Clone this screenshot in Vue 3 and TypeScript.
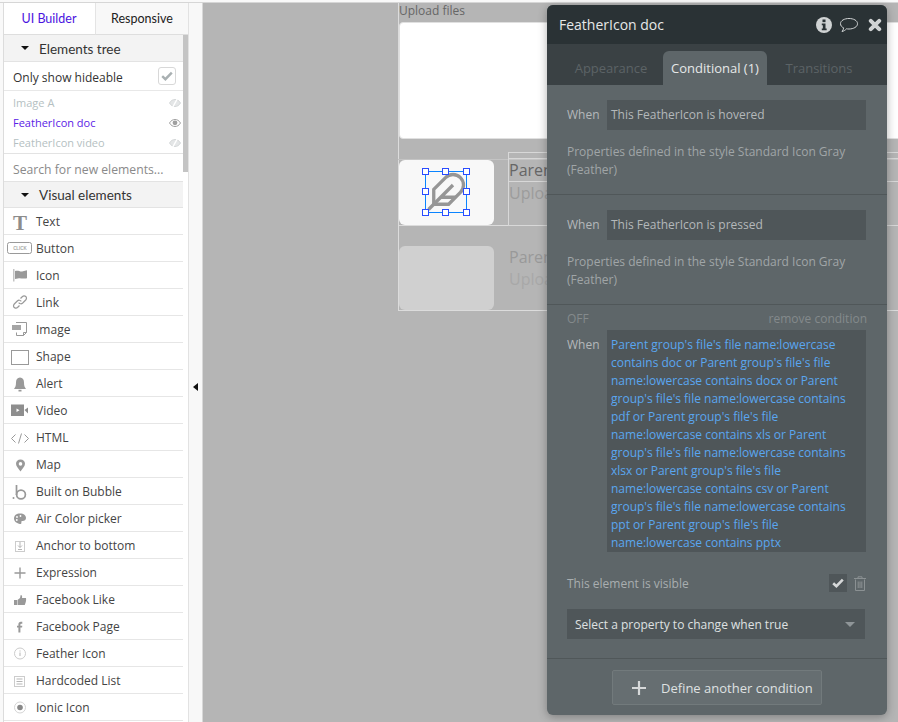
<script setup lang="ts">
interface Item { label: string; icon: string }
const items: Item[] = [
  { label: 'Text', icon: 'text' },
  { label: 'Button', icon: 'button' },
  { label: 'Icon', icon: 'flag' },
  { label: 'Link', icon: 'link' },
  { label: 'Image', icon: 'image' },
  { label: 'Shape', icon: 'shape' },
  { label: 'Alert', icon: 'bell' },
  { label: 'Video', icon: 'video' },
  { label: 'HTML', icon: 'html' },
  { label: 'Map', icon: 'pin' },
  { label: 'Built on Bubble', icon: 'bubble' },
  { label: 'Air Color picker', icon: 'palette' },
  { label: 'Anchor to bottom', icon: 'anchor' },
  { label: 'Expression', icon: 'plus' },
  { label: 'Facebook Like', icon: 'thumb' },
  { label: 'Facebook Page', icon: 'fb' },
  { label: 'Feather Icon', icon: 'info' },
  { label: 'Hardcoded List', icon: 'list' },
  { label: 'Ionic Icon', icon: 'radio' },
]
const handles = ['h-l h-t', 'h-c h-t', 'h-r h-t', 'h-l h-m', 'h-r h-m', 'h-l h-b', 'h-c h-b', 'h-r h-b']
const longCond = "Parent group's file's file name:lowercase contains doc or Parent group's file's file name:lowercase contains docx or Parent group's file's file name:lowercase contains pdf or Parent group's file's file name:lowercase contains xls or Parent group's file's file name:lowercase contains xlsx or Parent group's file's file name:lowercase contains csv or Parent group's file's file name:lowercase contains ppt or Parent group's file's file name:lowercase contains pptx"
</script>

<template>
  <div class="app">
    <aside class="side">
      <div class="tabs">
        <div class="tab on">UI Builder</div>
        <div class="tab">Responsive</div>
      </div>
      <div class="scrollwrap">
        <div class="list">
          <div class="sec"><span class="tri"></span>Elements tree</div>
          <div class="hideable">
            <span class="hide-label">Only show hideable</span>
            <span class="chk"><svg width="12" height="10" viewBox="0 0 12 10"><path d="M1.2 5.2 4.4 8.2 10.8 1.6" fill="none" stroke="#a9b0b2" stroke-width="2.4"/></svg></span>
          </div>
          <div class="tree">
            <div class="node dim">Image A<svg class="eye" width="12" height="10" viewBox="0 0 12 10"><path d="M.5 5C2 2.4 4 1.5 6 1.5S10 2.4 11.500 5C10 7.600 8 8.500 6 8.500S2 7.600.5 5Z" fill="#e4e6e7" stroke="#d5d8d9"/><path d="M8.500 .5 3.500 9.500" stroke="#fff" stroke-width="1.500"/></svg></div>
            <div class="node sel">FeatherIcon doc<svg class="eye" width="12" height="10" viewBox="0 0 12 10"><path d="M.5 5C2 2.400 4 1.500 6 1.500S10 2.400 11.500 5C10 7.600 8 8.500 6 8.500S2 7.600.5 5Z" fill="none" stroke="#a0a0a0"/><circle cx="6" cy="4.800" r="2.400" fill="#a0a0a0"/></svg></div>
            <div class="node dim">FeatherIcon video<svg class="eye" width="12" height="10" viewBox="0 0 12 10"><path d="M.5 5C2 2.400 4 1.500 6 1.500S10 2.400 11.500 5C10 7.600 8 8.500 6 8.500S2 7.600.5 5Z" fill="#e4e6e7" stroke="#d5d8d9"/><path d="M8.500 .5 3.500 9.500" stroke="#fff" stroke-width="1.500"/></svg></div>
          </div>
          <div class="search">Search for new elements...</div>
          <div class="sec sec2"><span class="tri"></span>Visual elements</div>
          <div v-for="it in items" :key="it.label" class="row">
            <span class="ico">
              <svg class="rowicon" width="24" height="20" viewBox="0 0 24 20">
                <template v-if="it.icon === 'text'">
                  <text x="12" y="18.500" text-anchor="middle" class="serifT">T</text>
                </template>
                <template v-else-if="it.icon === 'button'">
                  <rect x="-.5" y="4.500" width="24" height="11" rx="2" fill="none" stroke="#9a9a9a"/>
                  <text x="12" y="11.700" text-anchor="middle" class="click">CLICK</text>
                </template>
                <template v-else-if="it.icon === 'flag'">
                  <path d="M5 4h1.500v12.500H5z" fill="#c4c4c4"/><path d="M7 6c3-1.200 5 1 8 .2l4-1v8c-3 1-6-.2-8 0l-4 .8z" fill="#999"/>
                </template>
                <template v-else-if="it.icon === 'link'">
                  <path d="M12.500 6.500 14.500 4.500c1.600-1.400 4-.2 4 1.600 0 .8-.3 1.300-.8 1.900l-3 3c-1.300 1.200-3 1-4-.4M11.500 13.500 9.500 15.500c-1.600 1.400-4 .2-4-1.600 0-.8.3-1.300.8-1.900l3-3c1.300-1.200 3-1 4 .4" fill="none" stroke="#999" stroke-width="1.200"/>
                </template>
                <template v-else-if="it.icon === 'image'">
                  <path d="M8 3.500h10.500v10l-3 3H8.500v-3" fill="none" stroke="#999"/><rect x="4" y="6" width="9" height="5" fill="#a5a5a5"/><path d="M15.500 16.500v-3h3" fill="none" stroke="#999"/>
                </template>
                <template v-else-if="it.icon === 'shape'">
                  <rect x="3.500" y="4.500" width="17" height="14" fill="#fff" stroke="#999"/>
                </template>
                <template v-else-if="it.icon === 'bell'">
                  <path d="M12 4.500c2.800 0 4 2.200 4 5 0 3 .5 4.500 2 6.500H6c1.500-2 2-3.500 2-6.500 0-2.800 1.200-5 4-5Z" fill="#999"/><rect x="10.500" y="16.800" width="3" height="1.700" fill="#999"/>
                </template>
                <template v-else-if="it.icon === 'video'">
                  <rect x="3" y="4.500" width="13" height="11.500" fill="#8e8e8e"/><path d="M16.500 10 20 7.500v6z" fill="#8e8e8e"/><path d="M8.500 8.500 11.500 10.300 8.500 12z" fill="#fff"/>
                </template>
                <template v-else-if="it.icon === 'html'">
                  <path d="M7.500 7.500 3.500 11.500l4 4M16.500 7.500l4 4-4 4M13.500 6.500 10.500 16.500" fill="none" stroke="#999"/>
                </template>
                <template v-else-if="it.icon === 'pin'">
                  <path fill-rule="evenodd" d="M12.500 5.500c2.600 0 4.500 1.900 4.500 4.300 0 2.700-2.700 5-4.500 7.700-1.800-2.700-4.500-5-4.500-7.700 0-2.400 1.900-4.300 4.500-4.300Zm0 2.600a1.800 1.800 0 1 0 0 3.600 1.800 1.800 0 0 0 0-3.600Z" fill="#999"/>
                </template>
                <template v-else-if="it.icon === 'bubble'">
                  <circle cx="5.500" cy="17" r="1" fill="#999"/><path d="M8.500 4v10" stroke="#999" stroke-width="1.700"/><circle cx="13" cy="13.500" r="4.400" fill="none" stroke="#999" stroke-width="1.700"/>
                </template>
                <template v-else-if="it.icon === 'palette'">
                  <path fill-rule="evenodd" d="M12 5.500c3.900 0 6 1.900 6 4.500 0 2-1.600 3-3.300 3-1.200 0-1.700.6-1.300 1.500.3.900-.2 1.500-1.400 1.500C9 15.500 6 13.600 6 10.500S8.500 5.500 12 5.500Z" fill="#999"/><circle cx="9" cy="9" r=".9" fill="#fff"/><circle cx="12.500" cy="8" r=".9" fill="#fff"/><circle cx="8.800" cy="12" r=".9" fill="#fff"/>
                </template>
                <template v-else-if="it.icon === 'anchor'">
                  <rect x="7.500" y="6.500" width="9" height="10" fill="none" stroke="#ccc"/><path d="M12 7v5.500M10 10.500l2 2 2-2M10 14.500h4" fill="none" stroke="#b5b5b5"/>
                </template>
                <template v-else-if="it.icon === 'plus'">
                  <path d="M12 5.500v11M6.500 11h11" stroke="#999" stroke-width="1.400"/>
                </template>
                <template v-else-if="it.icon === 'thumb'">
                  <path d="M6 11h3v5H6zM9.500 11l2.500-2 .7-3c1.300 0 1.700 1.200 1.300 3H18c.4 2-.2 5-1.300 7H9.500z" fill="#999"/>
                </template>
                <template v-else-if="it.icon === 'fb'">
                  <path d="M10.400 16.500V11.500H9V9.800h1.400V8.400c0-1.600.9-2.600 2.400-2.600h1.500v1.900h-1c-.6 0-.9.300-.9.900v1.200h1.900l-.2 1.700h-1.700v5z" fill="#999"/>
                </template>
                <template v-else-if="it.icon === 'info'">
                  <circle cx="12" cy="10.500" r="5.500" fill="none" stroke="#ccc"/><path d="M12 9.500v3.500M12 7.500v1" stroke="#b5b5b5"/>
                </template>
                <template v-else-if="it.icon === 'list'">
                  <rect x="6.500" y="6.500" width="10" height="10" fill="none" stroke="#ccc"/><path d="M8.500 9h6M8.500 11.500h6M8.500 14h6" stroke="#b5b5b5"/>
                </template>
                <template v-else>
                  <circle cx="12" cy="10.500" r="5.500" fill="none" stroke="#d5d5d5"/><circle cx="12" cy="10.500" r="2.800" fill="#888"/>
                </template>
              </svg>
            </span>
            <span>{{ it.label }}</span>
          </div>
        </div>
        <div class="sb"></div>
      </div>
    </aside>

    <div class="gutter"><span class="collapse"></span></div>

    <main class="canvas">
      <div class="cv-label">Upload files</div>
      <div class="cv-white"></div>
      <div class="cv-frame"></div>
      <div class="cv-row"></div>
      <div class="cv-card">
        <svg class="feather" width="42" height="42" viewBox="0 0 24 24" fill="none" stroke="#969696" stroke-width="1.900">
          <path d="M20.240 12.240a6 6 0 0 0-8.490-8.490L5 10.500V19h8.500z"/>
          <path d="M16 8 2 22M17.500 15H9"/>
        </svg>
        <div class="select"></div>
        <i v-for="h in handles" :key="h" class="h" :class="h"></i>
      </div>
      <div class="cv-group"></div>
      <div class="cv-inner"></div>
      <div class="cv-t1">Parent</div>
      <div class="cv-t2">Upload</div>
      <div class="cv-card2"></div>
      <div class="cv-t3">Parent</div>
      <div class="cv-t4">Upload</div>
    </main>

    <section class="panel">
      <header class="p-head">
        <span class="p-title">FeatherIcon doc</span>
        <span class="p-icons">
          <svg width="16" height="16" viewBox="0 0 18 18"><circle cx="9" cy="9" r="9" fill="#d0d3d4"/><rect x="7.300" y="2.800" width="3.400" height="3" fill="#2a3235"/><path d="M6.500 7.300h4.200V13H12v2H6.500v-2h1.200V9.300H6.500z" fill="#2a3235"/></svg>
          <svg class="bub" width="20" height="18" viewBox="0 0 20 18"><path d="M10 2.500c4.500 0 8.500 2 8.500 5.200S14.500 13 10 13c-1 0-1.800-.1-2.500-.2C6.500 14 4.500 15.300 3 15.500c1-1 1.500-2.200 1.600-3.700C2.600 11 1.500 9.500 1.500 7.700 1.500 4.500 5.500 2.500 10 2.500Z" fill="none" stroke="#d0d3d4"/></svg>
          <svg class="x" width="14" height="14" viewBox="0 0 14 14"><path d="M2.800 2.800 11.200 11.200M11.200 2.800 2.800 11.200" stroke="#d0d3d4" stroke-width="4" stroke-linecap="round"/></svg>
        </span>
      </header>
      <nav class="p-tabs">
        <span class="p-tab">Appearance</span>
        <span class="p-tab active">Conditional (1)</span>
        <span class="p-tab">Transitions</span>
      </nav>
      <div class="p-block">
        <div class="when"><span class="lbl">When</span><div class="cond">This FeatherIcon is hovered</div></div>
        <p class="note">Properties defined in the style Standard Icon Gray (Feather)</p>
      </div>
      <div class="p-block">
        <div class="when"><span class="lbl">When</span><div class="cond">This FeatherIcon is pressed</div></div>
        <p class="note">Properties defined in the style Standard Icon Gray (Feather)</p>
      </div>
      <div class="p-block last">
        <div class="off"><span>OFF</span><span>remove condition</span></div>
        <div class="when"><span class="lbl">When</span><div class="cond blue">{{ longCond }}</div></div>
        <div class="vis">
          <span>This element is visible</span>
          <span class="vis-r">
            <span class="vchk"><svg width="12" height="10" viewBox="0 0 12 10"><path d="M1.200 5.200 4.400 8.200 10.800 1.600" fill="none" stroke="#d6d8d9" stroke-width="2.600"/></svg></span>
            <svg width="14" height="15" viewBox="0 0 14 15"><path d="M2.500 3.500V14.500h9V3.500M1 2.500h12M5 2.500V.8h4v1.700M5.200 5.500v6.500M7 5.500v6.500M8.800 5.500v6.500" fill="none" stroke="#8b9193"/></svg>
          </span>
        </div>
        <div class="prop"><span>Select a property to change when true</span><span class="caret"></span></div>
      </div>
      <div class="p-foot">
        <button class="add"><svg width="14" height="14" viewBox="0 0 14 14"><path d="M7 0v14M0 7h14" stroke="#d6d8d9" stroke-width="2.200"/></svg>Define another condition</button>
      </div>
    </section>
  </div>
</template>

<style>
html, body { margin: 0; padding: 0; }
</style>

<style scoped>
.app {
  width: 898px; height: 722px; position: relative; overflow: hidden;
  display: flex; background: #f9f9f9; padding: 3px 0 0 3px; box-sizing: border-box;
  font-family: "Open Sans", "Noto Sans", sans-serif; font-size: 12px; color: #3a3a3a;
}
.app::before { content: ""; position: absolute; left: 0; right: 0; top: 2px; height: 1px; background: #d6d6d6; z-index: 1; }
.side { width: 185px; flex: none; background: #fff; display: flex; flex-direction: column; overflow: hidden; position: relative; }
.side::before { content: ""; position: absolute; left: 0; top: 0; bottom: 0; width: 1px; background: #dcdcdc; z-index: 1; }
.tabs { display: flex; height: 32px; flex: none; }
.tab { flex: none; width: 93px; line-height: 31px; text-align: center; background: #f8f8f8; border-bottom: 1px solid #dedede; border-left: 1px solid #e4e4e4; color: #222; box-sizing: border-box; font-family: "Lato", sans-serif; font-size: 12.5px; }
.tab.on { width: 92px; background: #fff; color: #4a14e0; border-left: 0; border-bottom-color: #dedede; }
.scrollwrap { flex: 1; position: relative; min-height: 0; overflow: hidden; }
.list { width: 180px; }
.sb { position: absolute; right: 0; top: 0; width: 5px; height: 137px; background: #c4c4c4; }
.sec { height: 26px; line-height: 28px; background: #f3f3f3; border-bottom: 1px solid #e3e3e3; padding-left: 36px; position: relative; font-family: "Lato", sans-serif; font-size: 13.5px; color: #333; }
.sec2 { border-top: 1px solid #e3e3e3; height: 25px; line-height: 26px; }
.tri { position: absolute; left: 18px; top: 11px; border: 4.5px solid transparent; border-top: 4.5px solid #111; border-bottom: 0; }
.hideable { height: 28px; display: flex; align-items: center; justify-content: space-between; padding: 0 7px 0 10px; border-bottom: 1px solid #e8e8e8; font-size: 12px; color: #333; }
.hide-label { padding-top: 2px; }
.chk { width: 16px; height: 16px; border: 1px solid #d8d8d8; border-radius: 3px; display: flex; align-items: center; justify-content: center; }
.tree { padding: 2px 0 0; border-bottom: 1px solid #e3e3e3; }
.node { height: 20px; line-height: 20px; padding-left: 10px; font-size: 11px; position: relative; }
.node.dim { color: #b5bfc2; }
.node.sel { color: #5a22e6; }
.eye { position: absolute; right: 2px; top: 5px; }
.search { height: 27px; line-height: 31px; padding-left: 10px; color: #8a8a8a; font-size: 12.2px; box-sizing: border-box; }
.row { height: 27px; display: flex; align-items: center; border-bottom: 1px solid #e6e6e6; box-sizing: border-box; color: #444; font-size: 12px; }
.ico { width: 33px; flex: none; display: flex; justify-content: center; padding-left: 1px; box-sizing: border-box; }
.rowicon { overflow: visible; }
.serifT { font-family: "Liberation Serif", serif; font-weight: 700; font-size: 21px; fill: #8c8c8c; }
.click { font-family: "Liberation Sans", sans-serif; font-size: 4.5px; font-weight: 700; fill: #aaa; }
.gutter { width: 15px; flex: none; background: #f8f8f8; position: relative; border-right: 1px solid #d8d8d8; border-left: 1px solid #e2e2e2; box-sizing: border-box; }
.collapse { position: absolute; left: 4px; top: 380px; border: 4.5px solid transparent; border-left: 0; border-right: 5px solid #111; }
.canvas { flex: 1; background: #b5b5b5; position: relative; }
.canvas > * { position: absolute; box-sizing: border-box; }
.cv-label { left: 196px; top: 0; color: #666; font-size: 12px; line-height: 16px; }
.cv-white { left: 196px; top: 19px; width: 520px; height: 117px; background: #fff; border: 1px solid #e0e0e0; border-radius: 4px; }
.cv-frame { left: 195px; top: 0; width: 600px; height: 308px; border: 1px solid #dcdcdc; border-top: 0; }
.cv-row { left: 195px; top: 156px; width: 600px; height: 67px; border-top: 1px solid #c4c4c4; border-bottom: 1px solid #dcdcdc; }
.cv-card { left: 196px; top: 157px; width: 95px; height: 65px; background: #f8f8f8; border-radius: 6px; }
.feather { position: absolute; left: 26px; top: 11px; }
.select { position: absolute; left: 26px; top: 11px; width: 42px; height: 42px; border: 1px solid #0a84ff; box-sizing: border-box; }
.h { position: absolute; width: 5px; height: 5px; border: 1px solid #2a4cff; background: #fff; box-sizing: content-box; }
.h-l { left: 23px; }
.h-c { left: 43px; }
.h-r { left: 64px; }
.h-t { top: 8px; }
.h-m { top: 28px; }
.h-b { top: 49px; }
.cv-group { left: 305px; top: 149px; width: 400px; height: 74px; border: 1px solid #d8d8d8; }
.cv-inner { left: 305px; top: 155px; width: 400px; height: 24px; border: 1px solid #d8d8d8; }
.cv-t1 { left: 306px; top: 157px; font-size: 16px; color: #666; line-height: 20px; white-space: nowrap; }
.cv-t2 { left: 306px; top: 180px; font-size: 16px; color: #9c9c9c; line-height: 20px; }
.cv-card2 { left: 196px; top: 243px; width: 95px; height: 64px; background: #d0d0d0; border-radius: 6px; }
.cv-t3 { left: 306px; top: 244px; font-size: 16px; color: #999; line-height: 20px; white-space: nowrap; }
.cv-t4 { left: 306px; top: 266px; font-size: 16px; color: #a8a8a8; line-height: 20px; }
.panel { position: absolute; left: 547px; top: 5px; width: 340px; height: 710px; background: #5e6669; border-radius: 6px; box-shadow: 0 2px 10px rgba(0,0,0,.3); overflow: hidden; display: flex; flex-direction: column; color: #a9aeb0; font-size: 12px; z-index: 2; }
.p-head { height: 39px; flex: none; background: #2a3235; display: flex; align-items: center; justify-content: space-between; padding: 0 5px 0 12px; color: #e6e8e8; }
.p-title { font-size: 14px; }
.p-icons { display: flex; align-items: center; gap: 6px; }
.p-icons .bub { margin-left: 1px; }
.p-icons .x { margin-left: 3px; }
.p-tabs { height: 41px; flex: none; background: #3a4144; display: flex; align-items: flex-end; padding-left: 12px; font-size: 13px; }
.p-tab { height: 34px; line-height: 34px; color: #5c6366; width: 104px; text-align: center; box-sizing: border-box; }
.p-tab.active { background: #5e6669; color: #e6e8e8; border-radius: 6px 6px 0 0; }
.p-block { padding: 15px 20px 15px; border-bottom: 1px solid #505759; }
.p-block.last { padding-top: 6px; padding-bottom: 0; height: 354px; box-sizing: border-box; }
.when { display: flex; align-items: flex-start; }
.lbl { width: 40px; flex: none; line-height: 30px; color: #b4b8ba; }
.cond { flex: 1; background: #4f5659; line-height: 18px; padding: 6px 4px; color: #b4b8ba; min-height: 18px; margin-right: 1px; }
.cond.blue { color: #5aa6f0; padding: 6px 4px 0; height: 222px; box-sizing: border-box; }
.note { margin: 13px 0 0; line-height: 18px; color: #a0a5a7; }
.off { display: flex; justify-content: space-between; line-height: 16px; margin-bottom: 3px; color: #848a8c; }
.vis { display: flex; justify-content: space-between; align-items: center; margin-top: 22px; height: 18px; }
.vis-r { display: flex; align-items: center; gap: 6px; }
.vchk { width: 18px; height: 18px; background: #4f5659; display: flex; align-items: center; justify-content: center; }
.prop { margin-top: 17px; height: 30px; background: #4f5659; width: 298px; display: flex; justify-content: space-between; align-items: center; padding: 0 10px 0 8px; box-sizing: border-box; color: #dfe1e1; }
.caret { border: 5px solid transparent; border-top: 5px solid #8f9598; border-bottom: 0; }
.p-foot { flex: 1; display: flex; justify-content: center; align-items: flex-start; padding-top: 11px; }
.add { width: 210px; height: 35px; background: #666e71; border: 1px solid #727a7c; border-radius: 2px; color: #dfe1e1; font: inherit; font-size: 13px; display: flex; align-items: center; gap: 15px; box-sizing: border-box; padding: 0 0 0 19px; }
</style>
